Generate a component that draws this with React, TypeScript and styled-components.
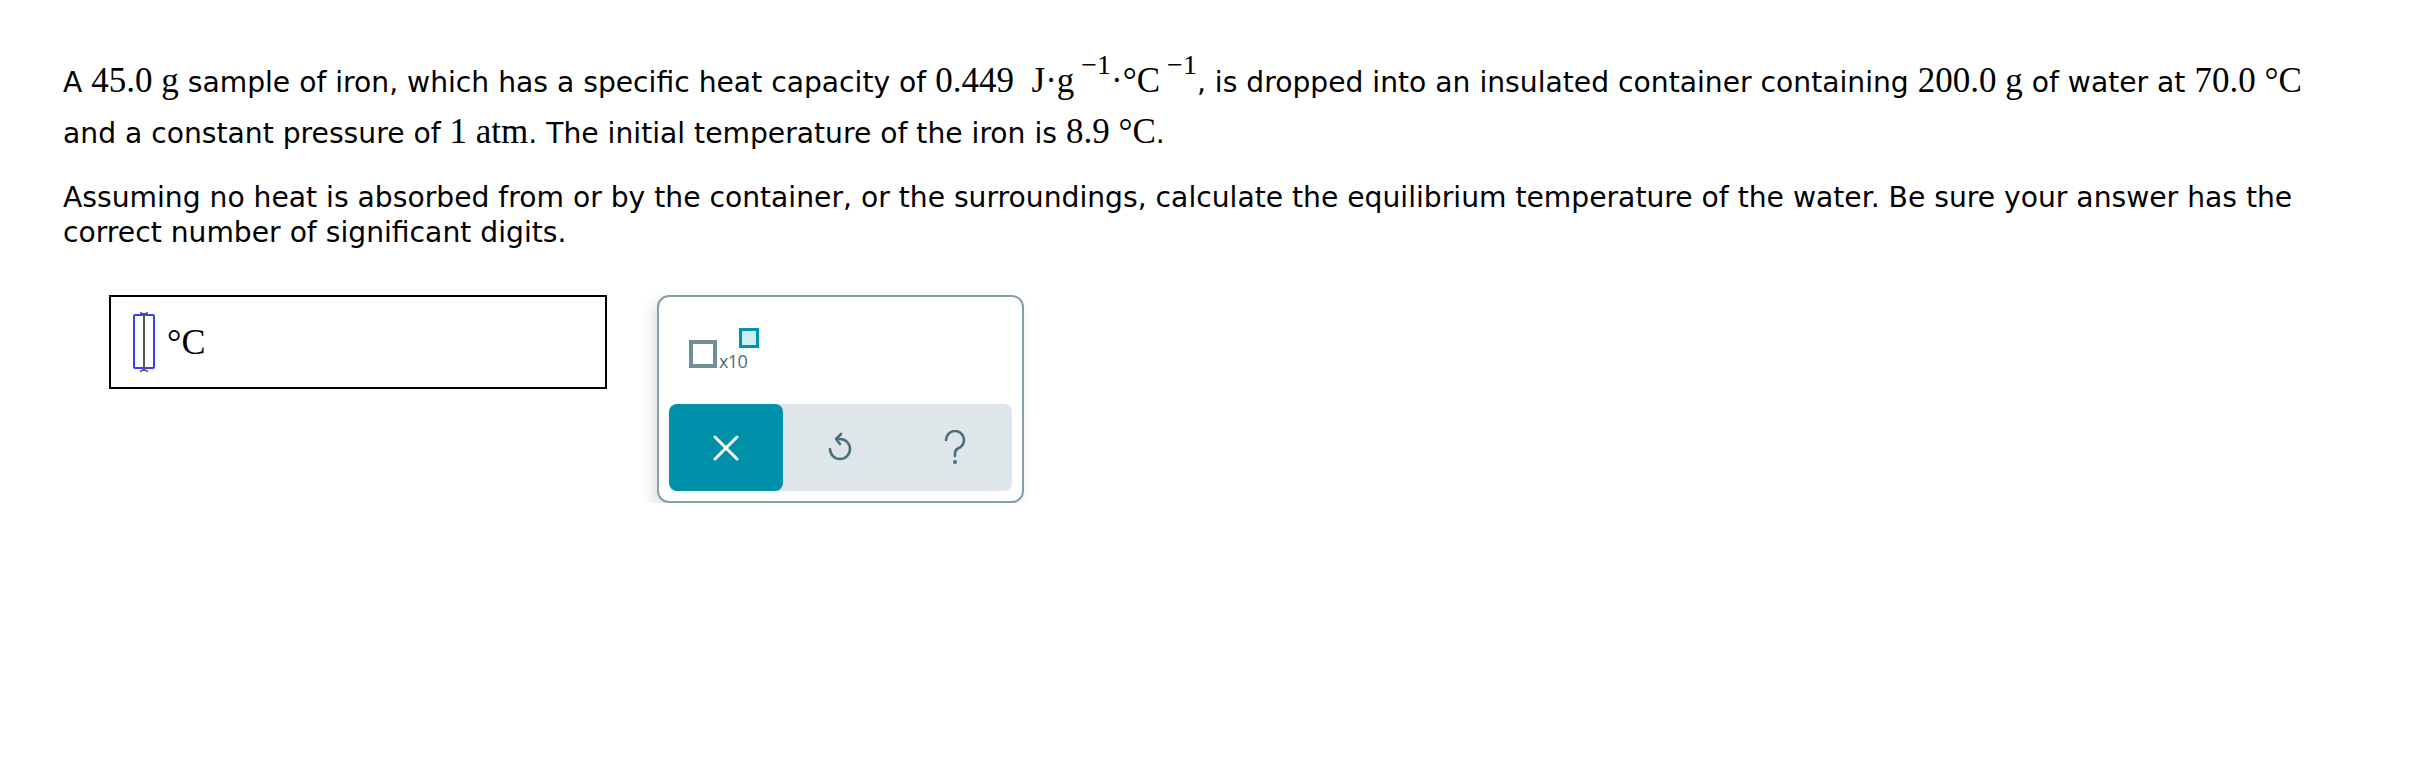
import styled, { createGlobalStyle } from 'styled-components';

const GlobalStyle = createGlobalStyle`
    html, body {
        margin: 0;
        padding: 0;
        background: #fff;
    }
    body {
        font-family: "DejaVu Sans", Verdana, sans-serif;
        color: #000;
    }
`

const Page = styled.div`
    width: 2410px;
    box-sizing: border-box;
    padding: 56px 60px 0 63px;
`
const Para = styled.p<{ gap?: number; tall?: boolean }>`
    margin: 0 0 ${p => p.gap ?? 0}px;
    font-size: 28.2px;
    line-height: ${p => (p.tall ? 49 : 35)}px;
    max-width: 2272px;
`
const M = styled.span`
    font-family: "Liberation Serif", "Times New Roman", serif;
    font-size: 35px;
`
const Sup = styled.sup`
    font-family: "Liberation Serif", "Times New Roman", serif;
    font-size: 28px;
    vertical-align: 18px;
    line-height: 0;
    margin-left: 7px;
`
const AnswerRow = styled.div`
    display: flex;
    align-items: flex-start;
    gap: 50px;
    margin-top: 45px;
    margin-left: 46px;
`
const AnswerBox = styled.div`
    width: 498px;
    height: 94px;
    box-sizing: border-box;
    border: 2px solid #000;
    display: flex;
    align-items: center;
    gap: 11px;
    padding-left: 21px;
`
const Unit = styled.span`
    font-family: "Liberation Serif", "Times New Roman", serif;
    font-size: 36px;
`
const Panel = styled.div`
    width: 367px;
    height: 208px;
    box-sizing: border-box;
    border: 2px solid #849fa8;
    border-radius: 12px;
    padding: 10px;
    display: flex;
    flex-direction: column;
    box-shadow: -4px 6px 14px rgba(0, 0, 0, 0.13);
`
const Palette = styled.div`
    flex: 1;
    display: flex;
    align-items: flex-start;
    padding: 21px 0 0 20px;
`
const Sci = styled.div`
    display: flex;
    align-items: flex-end;
    padding-top: 12px;
`
const Slot = styled.div`
    width: 28px;
    height: 28px;
    box-sizing: border-box;
    border: 4px solid #6f8f99;
`
const Times = styled.span`
    font-family: "Open Sans", "DejaVu Sans", sans-serif;
    font-size: 18px;
    line-height: 18px;
    color: #4c6d78;
    margin-left: 2px;
    margin-bottom: -2px;
    letter-spacing: -0.6px;
`
const Exp = styled.div`
    width: 20px;
    height: 20px;
    box-sizing: border-box;
    border: 3px solid #0093b0;
    background: #cdeef3;
    align-self: flex-start;
    margin-top: -12px;
    margin-left: -8px;
`
const Bar = styled.div`
    height: 87px;
    display: grid;
    grid-template-columns: repeat(3, 1fr);
    background: #dfe6e9;
    border-radius: 8px;
`
const Btn = styled.div<{ primary?: boolean }>`
    display: flex;
    align-items: center;
    justify-content: center;
    border-radius: 8px;
    background: ${p => (p.primary ? '#0090a9' : 'transparent')};
    color: ${p => (p.primary ? '#fff' : '#4a6f7b')};
`

function Cursor() {
    return (
        <svg width="24" height="62" viewBox="0 0 24 62">
            <rect x="2" y="4" width="20" height="53" fill="none" stroke="#3a3aff" strokeWidth="2" rx="1" />
            <line x1="12" y1="2" x2="12" y2="60" stroke="#555" strokeWidth="2" />
            <path d="M8 1.5 L12 3.5 L16 1.5 M8 60.5 L12 58.5 L16 60.5" stroke="#555" strokeWidth="1.5" fill="none" />
        </svg>
    );
}

function ClearIcon() {
    return (
        <svg width="26" height="26" viewBox="0 0 26 26">
            <path d="M2 2 L24 24 M24 2 L2 24" stroke="currentColor" strokeWidth="3" strokeLinecap="round" />
        </svg>
    );
}

function UndoIcon() {
    return (
        <svg width="28" height="32" viewBox="0 0 28 32">
            <path d="M11 7 H14 A10 10 0 1 1 4 17" fill="none" stroke="currentColor" strokeWidth="2.6" strokeLinecap="round" />
            <path d="M15 2 L10 7 L14 12" fill="none" stroke="currentColor" strokeWidth="2.6" strokeLinecap="round" strokeLinejoin="round" />
        </svg>
    );
}

function HelpIcon() {
    return (
        <svg width="24" height="36" viewBox="0 0 24 36">
            <path d="M3 10 A9 9 0 1 1 15 18.5 C13 19.5 12 21 12 23.5 V26" fill="none" stroke="currentColor" strokeWidth="2.6" strokeLinecap="round" />
            <circle cx="12" cy="32" r="2" fill="currentColor" />
        </svg>
    );
}

export default function App() {
    return (
        <>
            <GlobalStyle />
            <Page>
                <Para tall gap={22}>
                    A <M>45.0 g</M> sample of iron, which has a specific heat capacity of{' '}
                    <M>0.449&nbsp;&nbsp;J·g</M><Sup>−1</Sup><M>·°C</M><Sup>−1</Sup>, is dropped into an
                    insulated container containing <M>200.0 g</M> of water at <M>70.0 °C</M> and a constant
                    pressure of <M>1 atm</M>. The initial temperature of the iron is <M>8.9 °C</M>.
                </Para>
                <Para>
                    Assuming no heat is absorbed from or by the container, or the surroundings, calculate the
                    equilibrium temperature of the water. Be sure your answer has the correct number of
                    significant digits.
                </Para>
                <AnswerRow>
                    <AnswerBox>
                        <Cursor />
                        <Unit>°C</Unit>
                    </AnswerBox>
                    <Panel>
                        <Palette>
                            <Sci>
                                <Slot />
                                <Times>x10</Times>
                                <Exp />
                            </Sci>
                        </Palette>
                        <Bar>
                            <Btn primary><ClearIcon /></Btn>
                            <Btn><UndoIcon /></Btn>
                            <Btn><HelpIcon /></Btn>
                        </Bar>
                    </Panel>
                </AnswerRow>
            </Page>
        </>
    );
}
